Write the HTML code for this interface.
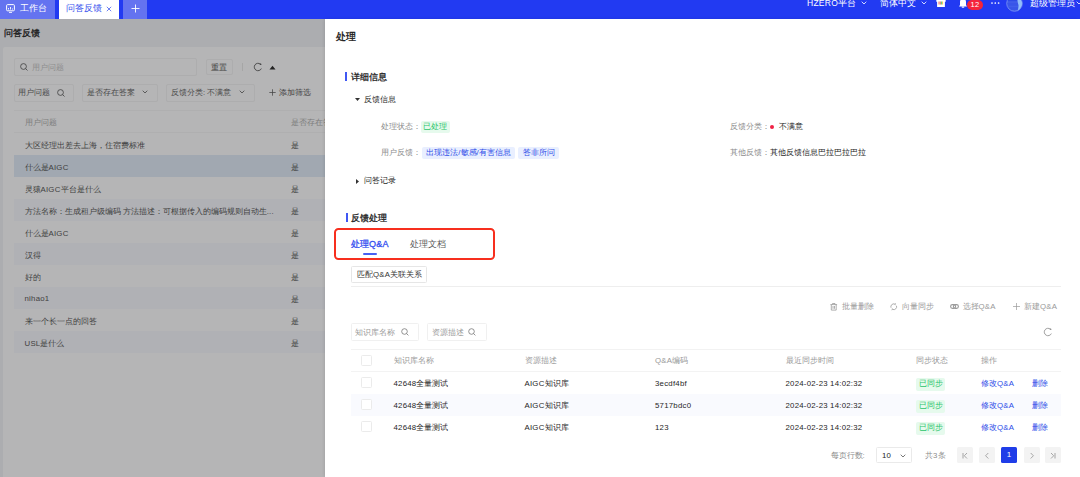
<!DOCTYPE html>
<html><head><meta charset="utf-8">
<style>
*{box-sizing:border-box;margin:0;padding:0}
html,body{width:1080px;height:477px;overflow:hidden;background:#fff;font-family:"Liberation Sans",sans-serif;color:#262626}
.a{position:absolute;white-space:nowrap}
#top{position:absolute;left:0;top:0;width:1080px;height:19px;background:#223af2;overflow:hidden}
.tab{position:absolute;top:0;height:19px}
.tt{font-size:9px;line-height:16px;color:#fff}
#left{position:absolute;left:0;top:19px;width:325px;height:458px;background:#acadb0;overflow:hidden}
.card{position:absolute;left:3.4px;top:27.8px;width:330px;height:440px;background:#b5b5b6;border-radius:2px}
.inp{position:absolute;border:0.7px solid #adadae;border-radius:2px;background:#b5b5b6}
.lt{font-size:7.8px;color:#404040}
.lg{color:#7d7d7d}
.row{position:absolute;left:13.8px;width:320px;height:22px}
#drawer{position:absolute;left:325px;top:19px;width:755px;height:458px;background:#fff;overflow:hidden;box-shadow:-1.5px 0 3px rgba(0,0,0,0.12)}
.t{font-size:7.8px;line-height:10px;color:#262626}
.g{color:#8c8c8c}
.bar{position:absolute;width:2px;background:#4058f3}
.tag{position:absolute;height:12px;border-radius:2px;font-size:7.8px;line-height:12px;text-align:center}
.blue{color:#2d4ce8}
.line{position:absolute;height:1px;background:#eeeeee}
.cb{position:absolute;width:11px;height:11px;border:0.7px solid #ebebeb;border-radius:1.5px;background:#fff}
.pg{position:absolute;top:428.3px;width:16px;height:15.5px;border-radius:1.5px;background:#f3f3f3;font-size:8px;line-height:15.5px;text-align:center;color:#8c8c8c}.pg svg{display:block;position:relative;top:0.6px}
</style></head><body>

<div id="top">
  <div class="tab" style="left:0;width:55px;background:#6473f0">
    <svg class="a" style="left:6px;top:4px" width="9" height="9" viewBox="0 0 9 9"><rect x="0.6" y="0.6" width="7.8" height="6.2" rx="1" fill="none" stroke="#fff" stroke-width="1"/><path d="M2.5 5.5V4M4.5 5.5V3M6.5 5.5V4.5M3 8.4h3" stroke="#fff" stroke-width="0.9" fill="none"/></svg>
    <div class="a tt" style="left:20px;top:0">工作台</div>
  </div>
  <div class="tab" style="left:58.5px;width:60.5px;background:#fff">
    <div class="a tt" style="left:7.5px;top:0;color:#3651ee">问答反馈</div><svg class="a" style="left:47.5px;top:6px" width="6" height="6" viewBox="0 0 6 6"><path d="M0.8 0.8l4.4 4.4M5.2 0.8L0.8 5.2" stroke="#4a60ee" stroke-width="0.8"/></svg>
  </div>
  <div class="tab" style="left:123px;width:24px;background:#6473f0">
    <svg class="a" style="left:8px;top:4px" width="9" height="9" viewBox="0 0 9 9"><path d="M4.5 0.5v8M0.5 4.5h8" stroke="#fff" stroke-width="0.9"/></svg>
  </div>
  <div class="a tt" style="left:807px;top:-5.5px;font-size:8.5px">HZERO平台</div>
  <svg class="a" style="left:861px;top:1px" width="6" height="4" viewBox="0 0 6 4"><path d="M0.7 0.7L3 3 5.3 0.7" stroke="#fff" stroke-width="0.8" fill="none"/></svg>
  <div class="a tt" style="left:880px;top:-5.5px;font-size:8.5px">简体中文</div>
  <svg class="a" style="left:921px;top:1px" width="6" height="4" viewBox="0 0 6 4"><path d="M0.7 0.7L3 3 5.3 0.7" stroke="#fff" stroke-width="0.8" fill="none"/></svg>
  <!-- gift -->
  <svg class="a" style="left:936px;top:-3px" width="10" height="11" viewBox="0 0 10 11"><path d="M0.3 2.5h9.4v2.3h-0.8V10H1.1V4.8H0.3z" fill="#fff"/><path d="M3 4.5v3M4.3 4.5v3" stroke="#f0584a" stroke-width="0.9"/><path d="M5.4 4.5v3" stroke="#37c26a" stroke-width="0.9"/><path d="M6.6 4.5v3" stroke="#f5b731" stroke-width="0.9"/></svg>
  <!-- bell -->
  <svg class="a" style="left:958px;top:-2px" width="10" height="10" viewBox="0 0 10 10"><path d="M1 8.5h8L8 7V4a3 3 0 0 0-6 0v3z" fill="#fff"/><rect x="3.8" y="8.5" width="2.4" height="1.2" fill="#fff"/></svg>
  <div class="a" style="left:967px;top:-0.4px;width:16px;height:10px;border-radius:5px;background:#f5243b;color:#fff;font-size:7.5px;line-height:10px;text-align:center">12</div>
  <svg class="a" style="left:990.5px;top:2.3px" width="9" height="2" viewBox="0 0 9 2"><circle cx="1" cy="1" r="0.85" fill="#fff"/><circle cx="4.3" cy="1" r="0.85" fill="#fff"/><circle cx="7.6" cy="1" r="0.85" fill="#fff"/></svg>
  <svg class="a" style="left:1006.3px;top:-5px" width="17" height="17" viewBox="0 0 17 17"><defs><clipPath id="cc"><circle cx="8.5" cy="8.5" r="7.8"/></clipPath></defs><circle cx="8.5" cy="8.5" r="7.8" fill="#2a47e6"/><g clip-path="url(#cc)" stroke="#5d7cf2" stroke-width="0.45"><path d="M0 6.3h17M0 7.6h17M0 8.9h17M0 10.2h17M0 11.5h17M0 12.8h17M0 14.1h17M0 15.4h17"/></g><path d="M11.5 1.3C14 3 16.3 6 16.3 8.5 16.3 12 14 15 11.5 16 12.5 13 13 10.5 12 8.5 11.5 6 11 4 11.5 1.3z" fill="#92befa" clip-path="url(#cc)"/><circle cx="8.5" cy="8.5" r="7.8" fill="none" stroke="#8aa2f6" stroke-width="0.7"/></svg>
  <div class="a tt" style="left:1030px;top:-5.5px;font-size:8.5px">超级管理员</div>
  <svg class="a" style="left:1076px;top:1px" width="6" height="4" viewBox="0 0 6 4"><path d="M0.7 0.7L3 3 5.3 0.7" stroke="#fff" stroke-width="0.8" fill="none"/></svg>
</div>

<div id="left">
  <div class="a" style="left:3.5px;top:8px;font-size:9px;color:#1a1a1a;-webkit-text-stroke:0.3px #1a1a1a">问答反馈</div>
  <div class="card"></div>
  <!-- search -->
  <div class="inp" style="left:13.5px;top:39px;width:183px;height:18px"></div>
  <svg class="a" style="left:19.5px;top:44px" width="8" height="8" viewBox="0 0 8 8"><circle cx="3.5" cy="3.5" r="2.9" fill="none" stroke="#444" stroke-width="0.85"/><path d="M5.6 5.6L7.5 7.5" stroke="#444" stroke-width="0.85"/></svg>
  <div class="a lt lg" style="left:32px;top:43.7px;font-size:7.5px;color:#8e8e8e">用户问题</div>
  <div class="inp" style="left:205.5px;top:40px;width:27px;height:15.5px"></div>
  <div class="a lt" style="left:211px;top:43.7px;font-size:7.5px">重置</div>
  <div class="a" style="left:242.3px;top:44px;width:0.7px;height:8px;background:#a6a6a6"></div>
  <svg class="a" style="left:253px;top:43.3px" width="10" height="10" viewBox="0 0 10 10"><path d="M8.35 6.56A3.7 3.7 0 1 1 7.38 2.17" fill="none" stroke="#3c3c3c" stroke-width="0.85"/><path d="M8.5 3.1L6.5 2.8 7.9 1.1z" fill="#3c3c3c"/></svg>
  <svg class="a" style="left:269px;top:46px" width="7" height="5" viewBox="0 0 7 5"><path d="M0.5 4.5L3.5 0.8 6.5 4.5z" fill="#222"/></svg>
  <!-- filter row -->
  <div class="inp" style="left:13.5px;top:64.5px;width:60px;height:18.5px"></div>
  <div class="a lt" style="left:18px;top:69.2px;font-size:7.5px;color:#4a4a4a">用户问题</div>
  <svg class="a" style="left:57px;top:69.5px" width="8" height="8" viewBox="0 0 8 8"><circle cx="3.5" cy="3.5" r="2.9" fill="none" stroke="#444" stroke-width="0.85"/><path d="M5.6 5.6L7.5 7.5" stroke="#444" stroke-width="0.85"/></svg>
  <div class="inp" style="left:81.5px;top:64.5px;width:76px;height:18.5px"></div>
  <div class="a lt" style="left:87px;top:69.2px;font-size:7.5px;color:#4a4a4a">是否存在答案</div>
  <svg class="a" style="left:142px;top:71px" width="6" height="4" viewBox="0 0 6 4"><path d="M0.7 0.7L3 3 5.3 0.7" stroke="#444" stroke-width="0.8" fill="none"/></svg>
  <div class="inp" style="left:165.5px;top:64.5px;width:89px;height:18.5px"></div>
  <div class="a lt" style="left:171px;top:69.2px;font-size:7.5px;color:#4a4a4a">反馈分类: 不满意</div>
  <svg class="a" style="left:239px;top:71px" width="6" height="4" viewBox="0 0 6 4"><path d="M0.7 0.7L3 3 5.3 0.7" stroke="#444" stroke-width="0.8" fill="none"/></svg>
  <svg class="a" style="left:269px;top:69.5px" width="7" height="7" viewBox="0 0 7 7"><path d="M3.5 0.3v6.4M0.3 3.5h6.4" stroke="#444" stroke-width="0.75"/></svg><div class="a lt" style="left:279.3px;top:69.2px;font-size:7.5px;color:#404040">添加筛选</div>
  <!-- table -->
  <div class="a" style="left:13.8px;top:91px;width:320px;height:0.7px;background:#afafb0"></div><div class="a" style="left:13.8px;top:113px;width:320px;height:0.7px;background:#afafb0"></div>
  <div class="a lt lg" style="left:24.5px;top:98.1px">用户问题</div>
  <div class="a lt lg" style="left:290.5px;top:98.1px">是否存在答案</div>
  <div class="row" style="top:113.5px"></div>
  <div class="row" style="top:135.5px;background:#a1a8b1"></div>
  <div class="row" style="top:157.5px"></div>
  <div class="row" style="top:179.5px;background:#b0b1b5"></div>
  <div class="row" style="top:201.5px"></div>
  <div class="row" style="top:223.5px;background:#b0b1b5"></div>
  <div class="row" style="top:245.5px"></div>
  <div class="row" style="top:267.5px;background:#b0b1b5"></div>
  <div class="row" style="top:289.5px"></div>
  <div class="row" style="top:311.5px;background:#b0b1b5"></div>
  <div class="a lt" style="left:24.5px;top:120.6px">大区经理出差去上海，住宿费标准</div>
  <div class="a lt" style="left:24.5px;top:142.6px">什么是AIGC</div>
  <div class="a lt" style="left:24.5px;top:164.6px">灵猿AIGC平台是什么</div>
  <div class="a lt" style="left:24.5px;top:186.6px">方法名称：生成租户级编码 方法描述：可根据传入的编码规则自动生...</div>
  <div class="a lt" style="left:24.5px;top:208.6px">什么是AIGC</div>
  <div class="a lt" style="left:24.5px;top:230.6px">汉得</div>
  <div class="a lt" style="left:24.5px;top:252.6px">好的</div>
  <div class="a lt" style="left:24.5px;top:274.6px">nihao1</div>
  <div class="a lt" style="left:24.5px;top:296.6px">来一个长一点的回答</div>
  <div class="a lt" style="left:24.5px;top:318.6px">USL是什么</div>
  <div class="a lt" style="left:290.5px;top:120.6px">是</div>
  <div class="a lt" style="left:290.5px;top:142.6px">是</div>
  <div class="a lt" style="left:290.5px;top:164.6px">是</div>
  <div class="a lt" style="left:290.5px;top:186.6px">是</div>
  <div class="a lt" style="left:290.5px;top:208.6px">是</div>
  <div class="a lt" style="left:290.5px;top:230.6px">是</div>
  <div class="a lt" style="left:290.5px;top:252.6px">是</div>
  <div class="a lt" style="left:290.5px;top:274.6px">是</div>
  <div class="a lt" style="left:290.5px;top:296.6px">是</div>
  <div class="a lt" style="left:290.5px;top:318.6px">是</div>
</div>

<div id="drawer">
  <div class="a" style="left:10.5px;top:11px;font-size:10px;color:#1a1a1a;-webkit-text-stroke:0.35px #1a1a1a">处理</div>
  <!-- 详细信息 -->
  <div class="bar" style="left:20px;top:53px;height:8.5px"></div>
  <div class="a" style="left:26px;top:51.5px;font-size:9px;color:#222;-webkit-text-stroke:0.3px #222">详细信息</div>
  <svg class="a" style="left:30px;top:79px" width="5" height="3" viewBox="0 0 5 3"><path d="M0 0h5L2.5 3z" fill="#333"/></svg>
  <div class="a t" style="left:38.5px;top:75.5px">反馈信息</div>
  <div class="a t g" style="left:55.5px;top:103px">处理状态：</div>
  <div class="tag" style="left:95.5px;top:102px;width:29.5px;height:12.3px;background:#e6faed;color:#2bc46a">已处理</div>
  <div class="a t g" style="left:55.5px;top:129px">用户反馈：</div>
  <div class="tag" style="left:97px;top:127.5px;width:93px;background:#e9efff;color:#2d4ce8">出现违法/敏感/有害信息</div>
  <div class="tag" style="left:193px;top:127.5px;width:41px;background:#e9efff;color:#2d4ce8">答非所问</div>
  <div class="a t g" style="left:404.5px;top:103px">反馈分类：</div>
  <div class="a" style="left:445px;top:105.5px;width:4px;height:4px;border-radius:2px;background:#f02245"></div>
  <div class="a t" style="left:453.5px;top:103px">不满意</div>
  <div class="a t g" style="left:404.5px;top:129px">其他反馈：</div>
  <div class="a t" style="left:445px;top:129px">其他反馈信息巴拉巴拉巴拉</div>
  <svg class="a" style="left:31px;top:159.5px" width="3" height="5" viewBox="0 0 3 5"><path d="M0 0v5l3-2.5z" fill="#333"/></svg>
  <div class="a t" style="left:38.5px;top:156.5px">问答记录</div>
  <!-- 反馈处理 -->
  <div class="bar" style="left:20.5px;top:194px;height:8.5px"></div>
  <div class="a" style="left:26px;top:192.5px;font-size:9px;color:#222;-webkit-text-stroke:0.3px #222">反馈处理</div>
  <div class="a" style="left:8.8px;top:208.9px;width:161.2px;height:32.6px;border:2.1px solid #f72f1e;border-radius:4.5px"></div>
  <div class="a" style="left:26px;top:219px;font-size:9px;color:#3550f0;-webkit-text-stroke:0.3px #3550f0">处理Q&amp;A</div>
  <div class="a" style="left:38px;top:234px;width:13.5px;height:2px;border-radius:1px;background:#4760f2"></div>
  <div class="a" style="left:84.5px;top:219px;font-size:9px;color:#595959">处理文档</div>
  <div class="a" style="left:26px;top:247px;width:76px;height:17px;border:0.7px solid #e6e6e6;border-radius:1.5px"></div>
  <div class="a t" style="left:32px;top:250.5px;color:#333">匹配Q&amp;A关联关系</div>
  <div class="line" style="left:26px;top:266.5px;width:710px"></div>
  <!-- toolbar -->
  <svg class="a" style="left:505px;top:284px" width="7.5" height="7.5" viewBox="0 0 7.5 7.5"><path d="M0.4 1.6h6.7M2.5 1.6V0.5h2.5v1.1M1.3 1.6v5.5h4.9V1.6M3 3v2.8M4.5 3v2.8" stroke="#9a9a9a" stroke-width="0.8" fill="none"/></svg>
  <div class="a t g" style="left:517px;top:283px;color:#999">批量删除</div>
  <svg class="a" style="left:565px;top:284px" width="7.5" height="7.5" viewBox="0 0 7.5 7.5"><path d="M6.47 2.76A2.9 2.9 0 0 1 2.76 6.47M1.03 4.74A2.9 2.9 0 0 1 4.74 1.03" stroke="#9a9a9a" stroke-width="0.8" fill="none"/><path d="M2.2 5.3l0.5 1.2-1.2 0.4M5.3 2.2l-0.5-1.2 1.2-0.4" stroke="#9a9a9a" stroke-width="0.7" fill="none"/></svg>
  <div class="a t g" style="left:576.5px;top:283px;color:#999">向量同步</div>
  <svg class="a" style="left:625px;top:285.3px" width="9" height="5" viewBox="0 0 9 5"><rect x="0.6" y="0.6" width="5" height="3.8" rx="1.9" fill="none" stroke="#9a9a9a" stroke-width="1.1"/><rect x="3.4" y="0.6" width="5" height="3.8" rx="1.9" fill="none" stroke="#9a9a9a" stroke-width="1.1"/></svg>
  <div class="a t g" style="left:637.5px;top:283px;color:#999">选择Q&amp;A</div>
  <svg class="a" style="left:687.5px;top:284px" width="7" height="7" viewBox="0 0 7 7"><path d="M3.5 0v7M0 3.5h7" stroke="#999" stroke-width="0.7"/></svg>
  <div class="a t g" style="left:699px;top:283px;color:#999">新建Q&amp;A</div>
  <svg class="a" style="left:717.5px;top:308px" width="10" height="10" viewBox="0 0 10 10"><path d="M8.35 6.56A3.7 3.7 0 1 1 7.38 2.17" fill="none" stroke="#888" stroke-width="0.8"/><path d="M8.5 3.1L6.5 2.8 7.9 1.1z" fill="#888"/></svg>
  <!-- filter inputs -->
  <div class="a" style="left:25.5px;top:304px;width:68px;height:18px;border:0.7px solid #f0f0f0;border-radius:1.5px"></div>
  <div class="a t g" style="left:30px;top:309px;color:#999">知识库名称</div>
  <svg class="a" style="left:76px;top:309px" width="8" height="8" viewBox="0 0 8 8"><circle cx="3.5" cy="3.5" r="2.8" fill="none" stroke="#777" stroke-width="0.8"/><path d="M5.5 5.5L7.4 7.4" stroke="#777" stroke-width="0.8"/></svg>
  <div class="a" style="left:101.5px;top:304px;width:60px;height:18px;border:0.7px solid #f0f0f0;border-radius:1.5px"></div>
  <div class="a t g" style="left:106.5px;top:309px;color:#999">资源描述</div>
  <svg class="a" style="left:143px;top:309px" width="8" height="8" viewBox="0 0 8 8"><circle cx="3.5" cy="3.5" r="2.8" fill="none" stroke="#777" stroke-width="0.8"/><path d="M5.5 5.5L7.4 7.4" stroke="#777" stroke-width="0.8"/></svg>
  <!-- table -->
  <div class="line" style="left:26px;top:329.5px;width:710px;background:#f2f2f2"></div>
  <div class="line" style="left:26px;top:352px;width:710px;background:#f3f3f3"></div>
  <div class="a" style="left:26px;top:375px;width:710px;height:22px;background:#f9fafe"></div>
  <div class="cb" style="left:36px;top:336px"></div>
  <div class="cb" style="left:36px;top:358px"></div>
  <div class="cb" style="left:36px;top:380px"></div>
  <div class="cb" style="left:36px;top:402px"></div>
  <div class="a t g" style="left:68.5px;top:336.5px;color:#999">知识库名称</div>
  <div class="a t g" style="left:199.5px;top:336.5px;color:#999">资源描述</div>
  <div class="a t g" style="left:330px;top:336.5px;color:#999">Q&amp;A编码</div>
  <div class="a t g" style="left:460.5px;top:336.5px;color:#999">最近同步时间</div>
  <div class="a t g" style="left:591px;top:336.5px;color:#999">同步状态</div>
  <div class="a t g" style="left:656px;top:336.5px;color:#999">操作</div>

  <div class="a t" style="left:68.5px;top:360px">42648全量测试</div>
  <div class="a t" style="left:199.5px;top:360px">AIGC知识库</div>
  <div class="a t" style="left:330px;top:360px">3ecdf4bf</div>
  <div class="a t" style="left:460.5px;top:360px">2024-02-23 14:02:32</div>
  <div class="tag" style="left:591.2px;top:358.8px;width:29.2px;height:12.8px;line-height:12.8px;background:#e6faed;color:#2bc46a">已同步</div>
  <div class="a t blue" style="left:656px;top:360px">修改Q&amp;A</div>
  <div class="a t blue" style="left:706.5px;top:360px">删除</div>

  <div class="a t" style="left:68.5px;top:382px">42648全量测试</div>
  <div class="a t" style="left:199.5px;top:382px">AIGC知识库</div>
  <div class="a t" style="left:330px;top:382px">5717bdc0</div>
  <div class="a t" style="left:460.5px;top:382px">2024-02-23 14:02:32</div>
  <div class="tag" style="left:591.2px;top:380.8px;width:29.2px;height:12.8px;line-height:12.8px;background:#e6faed;color:#2bc46a">已同步</div>
  <div class="a t blue" style="left:656px;top:382px">修改Q&amp;A</div>
  <div class="a t blue" style="left:706.5px;top:382px">删除</div>

  <div class="a t" style="left:68.5px;top:404px">42648全量测试</div>
  <div class="a t" style="left:199.5px;top:404px">AIGC知识库</div>
  <div class="a t" style="left:330px;top:404px">123</div>
  <div class="a t" style="left:460.5px;top:404px">2024-02-23 14:02:32</div>
  <div class="tag" style="left:591.2px;top:402.8px;width:29.2px;height:12.8px;line-height:12.8px;background:#e6faed;color:#2bc46a">已同步</div>
  <div class="a t blue" style="left:656px;top:404px">修改Q&amp;A</div>
  <div class="a t blue" style="left:706.5px;top:404px">删除</div>

  <!-- pagination -->
  <div class="a t g" style="left:505.5px;top:432px">每页行数:</div>
  <div class="a" style="left:550.5px;top:428.3px;width:36px;height:15.5px;border:0.7px solid #eaeaea;border-radius:1.5px"></div>
  <div class="a t" style="left:557px;top:432px">10</div>
  <svg class="a" style="left:575px;top:434.5px" width="6" height="4" viewBox="0 0 6 4"><path d="M0.7 0.7L3 3 5.3 0.7" stroke="#555" stroke-width="0.8" fill="none"/></svg>
  <div class="a t g" style="left:600px;top:432px">共3条</div>
  <div class="pg" style="left:631.8px"><svg width="16" height="15.5" viewBox="0 0 16 15.5"><path d="M6 5v5.5M10 5L7.3 7.75 10 10.5" stroke="#8c8c8c" stroke-width="0.75" fill="none"/></svg></div>
  <div class="pg" style="left:654px"><svg width="16" height="15.5" viewBox="0 0 16 15.5"><path d="M9.3 5L6.6 7.75 9.3 10.5" stroke="#8c8c8c" stroke-width="0.75" fill="none"/></svg></div>
  <div class="pg" style="left:676.2px;background:#1f3de8;color:#fff">1</div>
  <div class="pg" style="left:698.8px"><svg width="16" height="15.5" viewBox="0 0 16 15.5"><path d="M6.7 5L9.4 7.75 6.7 10.5" stroke="#8c8c8c" stroke-width="0.75" fill="none"/></svg></div>
  <div class="pg" style="left:720.4px"><svg width="16" height="15.5" viewBox="0 0 16 15.5"><path d="M10 5v5.5M6 5L8.7 7.75 6 10.5" stroke="#8c8c8c" stroke-width="0.75" fill="none"/></svg></div>
</div>

<script>
(function(){
  var b=document.body,t=document.createElement('span');
  t.style.cssText='position:absolute;left:-9999px;top:0;font-size:100px;line-height:100px;white-space:nowrap';
  t.textContent='\u4e2d\u6587\u4e2d\u6587\u4e2d\u6587\u4e2d\u6587\u4e2d\u6587';
  b.appendChild(t);var w=t.getBoundingClientRect().width;b.removeChild(t);
  var nocjk=w<900,S=1.2,ls=(1-w/1000*S)/S;
  var re=/([\u2e80-\u9fff\uf900-\ufaff\uff00-\uffef]+)|([A-Za-z0-9&\-:.]+)/g;
  var walker=document.createTreeWalker(b,NodeFilter.SHOW_TEXT,null),nodes=[],n;
  while((n=walker.nextNode())){var p=n.parentNode;if(p.tagName!=='SCRIPT'&&p.tagName!=='STYLE'&&/\S/.test(n.nodeValue))nodes.push(n);}
  nodes.forEach(function(n){
    var v=n.nodeValue,f=document.createDocumentFragment(),last=0,m;re.lastIndex=0;
    while((m=re.exec(v))){
      if(m.index>last)f.appendChild(document.createTextNode(v.slice(last,m.index)));
      var sp=document.createElement('span');
      if(m[1]){ if(nocjk) sp.style.cssText='font-size:'+S+'em;letter-spacing:'+ls.toFixed(4)+'em;vertical-align:-0.09em;-webkit-text-stroke:0.12px currentColor'; }
      else sp.style.letterSpacing='0.25px';
      sp.textContent=m[0];f.appendChild(sp);last=m.index+m[0].length;
    }
    if(last<v.length)f.appendChild(document.createTextNode(v.slice(last)));
    n.parentNode.replaceChild(f,n);
  });
})();
</script>
</body></html>
